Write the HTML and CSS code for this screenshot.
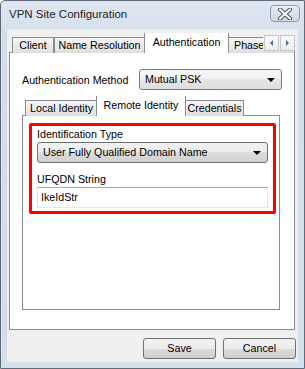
FILE: index.html
```html
<!DOCTYPE html>
<html lang="en">
    <head>
        <link rel="stylesheet" href="styles.css">
    </head>
    <body>
        <div class="window">
            <div class="titlebar">
                <span class="title">VPN Site Configuration</span>
                <div class="close">
                    <svg width="16" height="12" viewBox="0 0 16 12">
                        <path d="M3 1.5 L13 10.5 M13 1.5 L3 10.5" stroke="#4b5563" stroke-width="4.2" stroke-linecap="round"/>
                        <path d="M3 1.5 L13 10.5 M13 1.5 L3 10.5" stroke="#ffffff" stroke-width="2.2" stroke-linecap="round"/>
                    </svg>
                </div>
            </div>

            <div class="client">
                <div class="tabstrip outer">
                    <div class="tab t-client">Client</div>
                    <div class="tab t-names">Name Resolution</div>
                    <div class="tab active t-auth">Authentication</div>
                    <div class="tab t-phase">Phase 1</div>
                    <div class="scroller">
                        <div class="scroll-btn"><span class="tri left"></span></div>
                        <div class="scroll-btn"><span class="tri right"></span></div>
                    </div>
                </div>

                <div class="panel">
                    <div class="row">
                        <span>Authentication Method</span>
                        <div class="combo method">Mutual PSK<span class="arrow"></span></div>
                    </div>

                    <div class="tabstrip inner">
                        <div class="tab t-local">Local Identity</div>
                        <div class="tab active t-remote">Remote Identity</div>
                        <div class="tab t-creds">Credentials</div>
                    </div>
                    <div class="subpanel">
                        <div class="highlight">
                            <div class="label">Identification Type</div>
                            <div class="combo">User Fully Qualified Domain Name<span class="arrow"></span></div>
                            <div class="label second">UFQDN String</div>
                            <div class="textbox">IkeIdStr</div>
                        </div>
                    </div>
                </div>

                <div class="actions">
                    <div class="button">Save</div>
                    <div class="button">Cancel</div>
                </div>
            </div>
        </div>
    </body>
</html>
```

FILE: styles.css
```css
body {
    margin: 0px;
    padding: 0px;
    font-family: "Liberation Sans", Arial, sans-serif;
    font-size: 10.7px;
    color: #000;
}

.window {
    width: 305px;
    height: 369px;
    box-sizing: border-box;
    border: 1px solid #5f6b78;
    border-top-left-radius: 5px;
    background: linear-gradient(#dfe7f1, #d3deea 40px, #d6e0eb);
    padding: 0px 7px 6px 7px;
    display: flex;
    flex-direction: column;
}

.titlebar {
    height: 28px;
    display: flex;
    justify-content: space-between;
    align-items: flex-start;
}

.title {
    font-size: 11.5px;
    margin-top: 7px;
    padding-left: 1px;
    color: #1e1e1e;
}

.close {
    width: 30px;
    height: 17px;
    margin-top: 4px;
    margin-right: -3px;
    box-sizing: border-box;
    border: 1px solid #8d9cb1;
    border-radius: 4px;
    background: linear-gradient(#e9eef5, #d9e2ed 50%, #cdd8e5);
    display: flex;
    align-items: center;
    justify-content: center;
}

.client {
    flex: 1;
    background: #f0f0f0;
    display: flex;
    flex-direction: column;
    padding: 3px 2px 0px 1px;
    border: 1px solid #e6edf5;
    border-bottom: none;
    margin: 0px -1px;
}

/* tabs */
.tabstrip {
    display: flex;
    align-items: flex-end;
    height: 20px;
    padding-left: 3px;
    position: relative;
    overflow: hidden;
    flex: none;
}

.tab {
    height: 15px;
    line-height: 14px;
    padding: 0px;
    border: 1px solid #898c95;
    border-bottom: none;
    background: linear-gradient(#f6f6f6, #ebebeb 50%, #dedede);
    white-space: nowrap;
    text-align: center;
    flex: none;
}

.tab.active {
    height: 20px;
    line-height: 18px;
    background: #fff;
    margin: 0px -1px;
    position: relative;
    z-index: 1;
}

.t-client { width: 40px; }
.t-names { width: 89px; }
.t-auth { width: 83px; }
.t-phase { width: 60px; padding-left: 5px; text-align: left; }
.t-local { width: 71px; margin-right: -1px; }
.t-remote { width: 88px; }
.t-creds { width: 57px; }

.scroller {
    position: absolute;
    right: 0px;
    top: 2px;
    display: flex;
    gap: 1px;
    padding-left: 1px;
    background: #f0f0f0;
    z-index: 2;
}

.scroll-btn {
    width: 15px;
    height: 16px;
    box-sizing: border-box;
    border: 1px solid #c4c7cd;
    background: linear-gradient(#fafafa, #ececec);
    display: flex;
    align-items: center;
    justify-content: center;
}

.tri {
    width: 0px;
    height: 0px;
    border-top: 3px solid transparent;
    border-bottom: 3px solid transparent;
}

.tri.left {
    border-right: 3px solid #4d6ba3;
}

.tri.right {
    border-left: 3px solid #4d6ba3;
}

.panel {
    height: 278px;
    box-sizing: border-box;
    border: 1px solid #898c95;
    margin-top: -1px;
    background: #fff;
    padding: 16px 12px 0px 12px;
    flex: none;
}

.row {
    display: flex;
    justify-content: space-between;
    align-items: center;
}

/* combo boxes and buttons */
.combo {
    height: 21px;
    box-sizing: border-box;
    border: 1px solid #707070;
    border-radius: 3px;
    background: linear-gradient(#f2f2f2, #ebebeb 50%, #dddddd 50%, #cfcfcf);
    padding: 0px 20px 0px 5px;
    line-height: 19px;
    position: relative;
    white-space: nowrap;
}

.combo.method {
    width: 143px;
    border-color: #7a7a7a;
    background: linear-gradient(#f7f7f7, #f0f0f0 50%, #e6e6e6 50%, #dddddd);
}

.arrow {
    position: absolute;
    right: 6px;
    top: 8px;
    width: 0px;
    height: 0px;
    border-left: 4px solid transparent;
    border-right: 4px solid transparent;
    border-top: 4px solid #000;
}

.tabstrip.inner {
    margin-top: 6px;
}

.subpanel {
    height: 195px;
    box-sizing: border-box;
    border: 1px solid #898c95;
    margin: -1px 2px 0px 0px;
    background: #fff;
    padding: 7px 3px 0px 6px;
}

.highlight {
    border: 3px solid #ff0000;
    border-radius: 2px;
    padding: 1px 5px 3px 5px;
}

.label {
    line-height: 14px;
    height: 15px;
}

.label.second {
    margin-top: 9px;
}

.textbox {
    height: 21px;
    box-sizing: border-box;
    border: 1px solid #e2e3ea;
    border-top-color: #abadb3;
    border-bottom-color: #e3e9ef;
    background: #fff;
    padding: 0px 3px;
    line-height: 19px;
}

.actions {
    display: flex;
    justify-content: flex-end;
    gap: 7px;
    margin-top: 8px;
    margin-right: -1px;
}

.button {
    width: 73px;
    height: 21px;
    box-sizing: border-box;
    border: 1px solid #707070;
    border-radius: 3px;
    background: linear-gradient(#f2f2f2, #ebebeb 50%, #dddddd 50%, #cfcfcf);
    text-align: center;
    line-height: 19px;
}
```
